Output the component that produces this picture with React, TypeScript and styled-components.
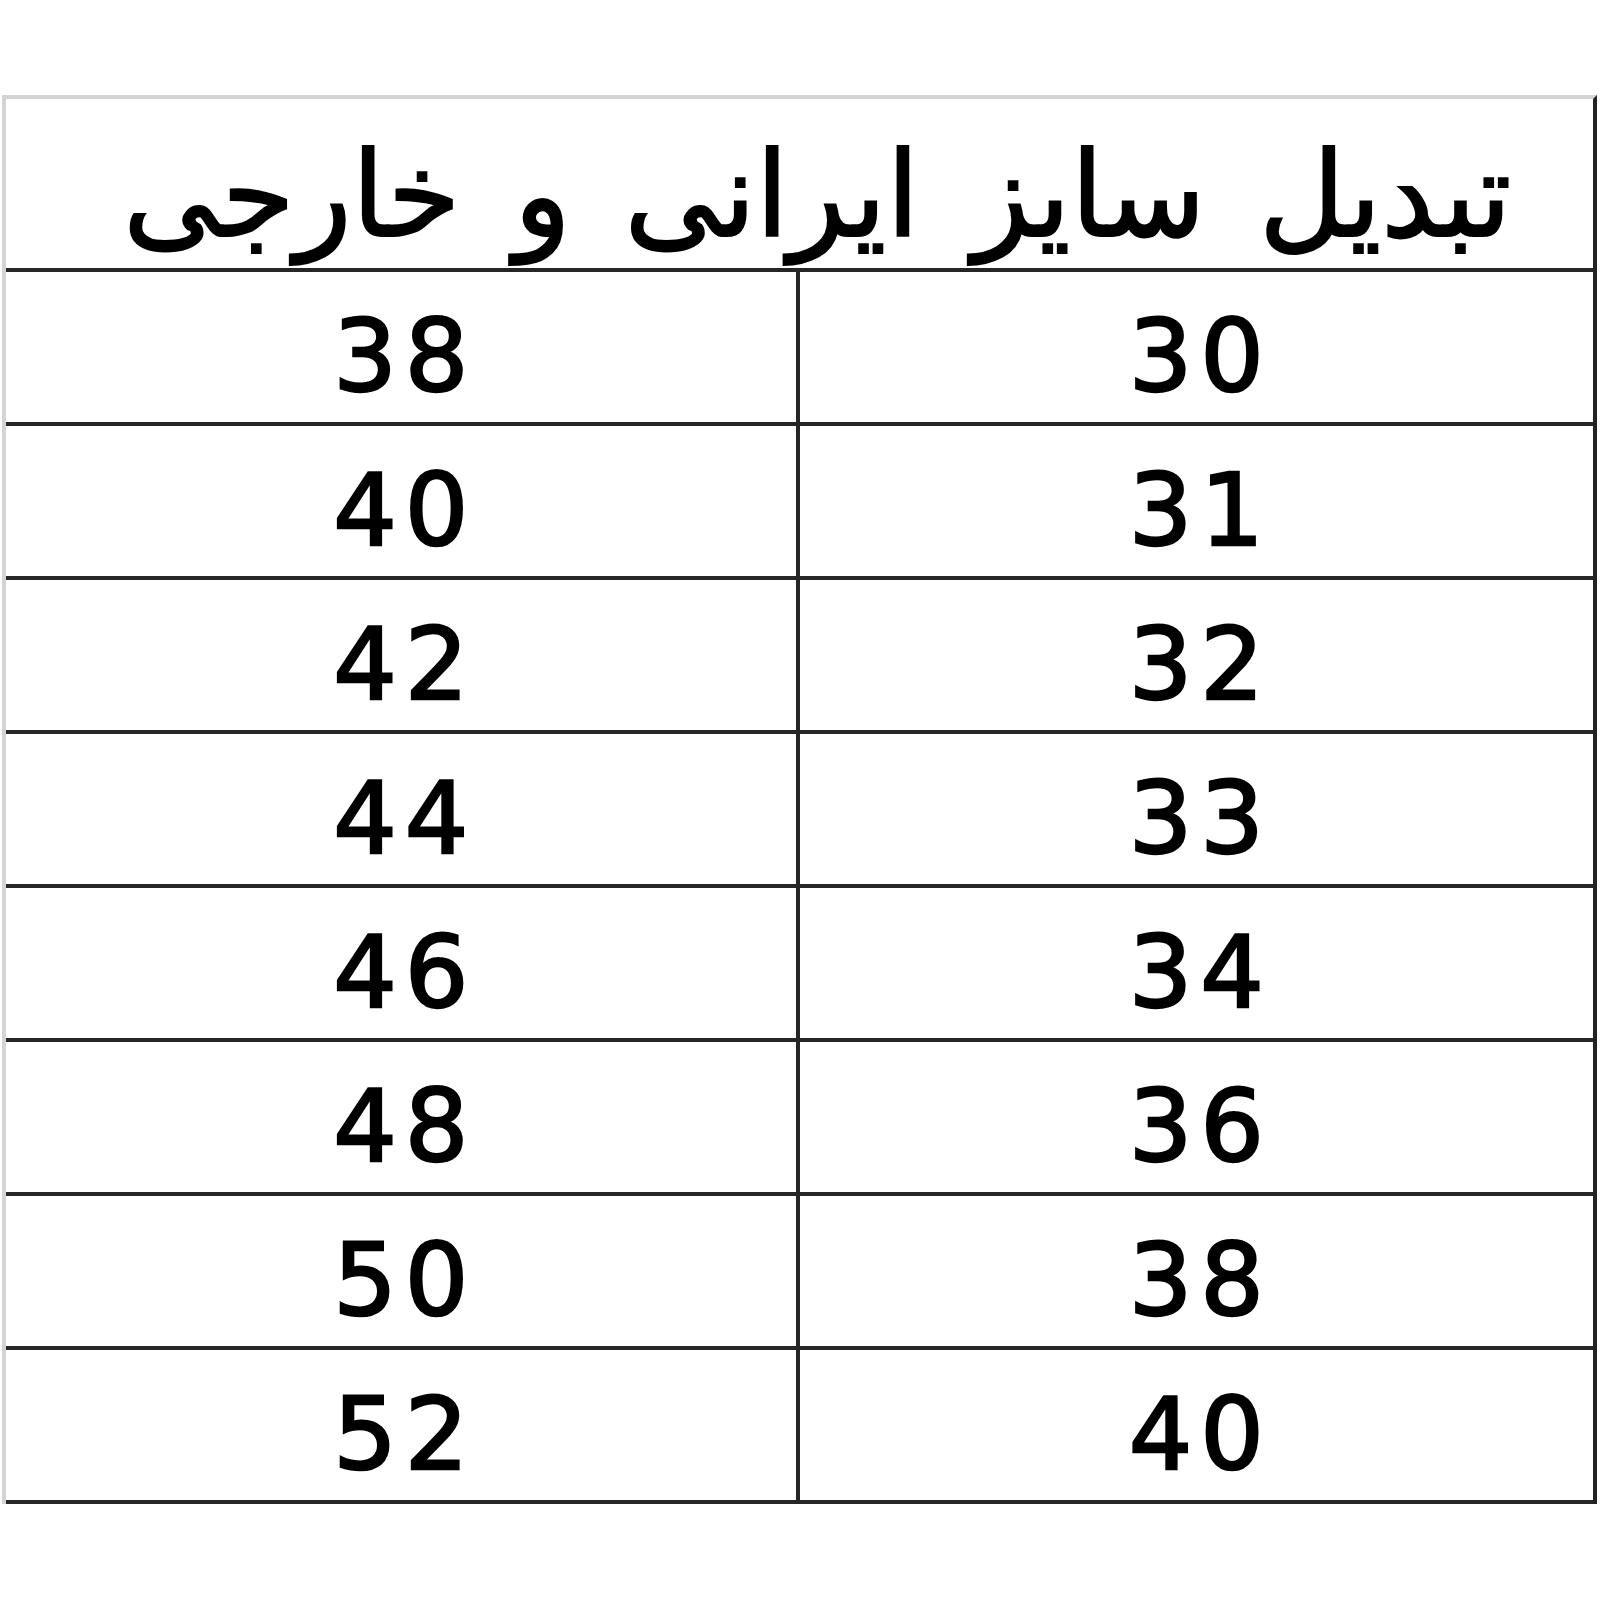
import { createGlobalStyle } from "styled-components";
import styled from "styled-components";

const GlobalStyle = createGlobalStyle`
  html, body {
    margin: 0;
    padding: 0;
    background: #fff;
  }
  body {
    font-family: "DejaVu Sans", "Noto Sans", sans-serif;
    color: #000;
  }
`

const StyledPage = styled.div`
  width: 1600px;
  height: 1600px;
  padding-top: 95px;
  padding-left: 2px;
  box-sizing: border-box;
  background: #fff;
`

const StyledTable = styled.div`
  width: 1595px;
  box-sizing: border-box;
  border-top: 4px solid #d4d4d4;
  border-left: 4px solid #d4d4d4;
  border-right: 4px solid #222;
  direction: rtl;
`

const StyledHeader = styled.div`
  height: 147px;
  border-bottom: 4px solid #262626;
  display: flex;
  align-items: center;
  justify-content: center;
  font-family: "DejaVu Sans", sans-serif;
  font-size: 118px;
  line-height: 1;
  word-spacing: 16px;
  -webkit-text-stroke: 2px #000;
  padding-top: 22px;
  padding-left: 36px;
  box-sizing: content-box;
`

const StyledRow = styled.div`
  display: grid;
  grid-template-columns: 1fr 1fr;
  height: 150px;
  border-bottom: 4px solid #262626;
`

const StyledCell = styled.div<{ $divider?: boolean }>`
  display: flex;
  align-items: center;
  justify-content: center;
  padding-top: 20px;
  padding-left: 8px;
  font-family: "DejaVu Sans", sans-serif;
  font-size: 100px;
  line-height: 1;
  letter-spacing: 8px;
  -webkit-text-stroke: 2.5px #000;
  direction: ltr;
  border-right: ${(p) => (p.$divider ? "4px solid #262626" : "none")};
`

const rows: [string, string][] = [
  ["30", "38"],
  ["31", "40"],
  ["32", "42"],
  ["33", "44"],
  ["34", "46"],
  ["36", "48"],
  ["38", "50"],
  ["40", "52"],
]

export default function App() {
  return (
    <>
      <GlobalStyle />
      <StyledPage>
        <StyledTable>
          <StyledHeader>تبدیل سایز ایرانی و خارجی</StyledHeader>
          {rows.map(([ir, foreign]) => (
            <StyledRow key={ir + foreign}>
              <StyledCell>{ir}</StyledCell>
              <StyledCell $divider>{foreign}</StyledCell>
            </StyledRow>
          ))}
        </StyledTable>
      </StyledPage>
    </>
  )
}
